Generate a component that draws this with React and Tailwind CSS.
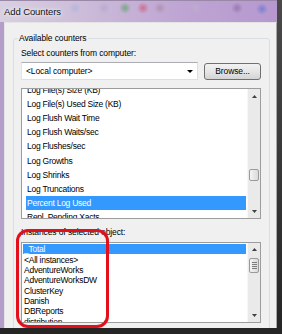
const counters = [
  'Log File(s) Size (KB)',
  'Log File(s) Used Size (KB)',
  'Log Flush Wait Time',
  'Log Flush Waits/sec',
  'Log Flushes/sec',
  'Log Growths',
  'Log Shrinks',
  'Log Truncations',
  'Percent Log Used',
  'Repl. Pending Xacts',
]

const instances = [
  '_Total',
  '<All instances>',
  'AdventureWorks',
  'AdventureWorksDW',
  'ClusterKey',
  'Danish',
  'DBReports',
  'distribution',
]

function Arrow({ up }) {
  return (
    <svg width="5" height="3" viewBox="0 0 5 3">
      <path d={up ? 'M0 3 L2.5 0 L5 3Z' : 'M0 0 L5 0 L2.5 3Z'} fill="#404040" />
    </svg>
  )
}

function Grip() {
  return (
    <svg width="5" height="7" viewBox="0 0 5 7">
      <path d="M0 0.5h5M0 2.5h5M0 4.5h5M0 6.5h5" stroke="#7d7d7d" strokeWidth="1" />
    </svg>
  )
}

function ScrollBar({ upClass, downClass, thumbClass, grip }) {
  return (
    <div className="flex w-[13px] flex-col border-l border-[#f7f7f7] bg-[#eaeaea]">
      <div className={`grid place-items-center ${upClass}`}>
        <Arrow up />
      </div>
      <div className="flex-1">
        <div className={`mx-[1px] grid place-items-center rounded-[2px] border border-[#9a9a9a] bg-gradient-to-r from-[#f4f4f4] to-[#dadada] ${thumbClass}`}>
          {grip && <Grip />}
        </div>
      </div>
      <div className={`grid place-items-center ${downClass}`}>
        <Arrow />
      </div>
    </div>
  )
}

function App() {
  return (
    <div className="relative h-[334px] w-[282px] overflow-hidden bg-gradient-to-b from-[#4a4a4a] to-[#252525] font-['Liberation_Sans',Arial,sans-serif] text-[8.5px] leading-[10px] tracking-[-0.1px] text-black">
      <div className="flex h-[328px] w-[277px] flex-col bg-[#b59dca]">
        <div className="flex h-[22px] items-center border-t border-[#9a88a8] bg-[radial-gradient(circle_at_75px_7px,rgba(150,175,225,0.45),transparent_6px),radial-gradient(circle_at_104px_7px,rgba(170,160,200,0.5),transparent_6px),radial-gradient(circle_at_125px_7px,rgba(70,160,80,0.6),transparent_6px),radial-gradient(circle_at_143px_7px,rgba(215,55,90,0.55),transparent_6px),radial-gradient(circle_at_160px_7px,rgba(150,110,130,0.4),transparent_6px),radial-gradient(circle_at_196px_7px,rgba(190,180,205,0.5),transparent_6px),radial-gradient(circle_at_237px_7px,rgba(120,85,145,0.5),transparent_6px),radial-gradient(circle_at_262px_8px,rgba(80,110,210,0.6),transparent_6px),linear-gradient(90deg,#d8d0e0,#cab8d8_35%,#bea5d3_65%,#b698cf)] pl-[4px] pt-[1px]">
          <span className="text-[9.5px] tracking-[-0.1px] text-[#111] [text-shadow:0_0_6px_#fff,0_0_3px_#fff]">Add Counters</span>
        </div>
        <div className="ml-[4px] flex-1 overflow-hidden border-l border-r border-t border-[#e4e4e4] border-r-[#a8a8a8] bg-[#f0f0f0]">
          <fieldset className="ml-[8px] mr-[6px] mt-[10px] h-[320px] rounded-[3px] border border-[#d5dfe5] pl-[7px] pr-[8px]">
            <legend className="-ml-[3px] px-[1px] leading-[10px]">Available counters</legend>
            <p className="mt-[5px] leading-[10px]">Select counters from computer:</p>
            <div className="mt-[4px] flex items-center gap-[6px]">
              <div className="flex h-[18px] w-[177px] items-center justify-between border border-[#abadb3] border-b-[#dbdfe6] border-l-[#e2e3ea] border-r-[#dbdfe6] bg-white pl-[4px] pr-[4px]">
                <span>&lt;Local computer&gt;</span>
                <svg width="6" height="3" viewBox="0 0 6 3">
                  <path d="M0 0 L6 0 L3 3Z" fill="#000" />
                </svg>
              </div>
              <button className="h-[17px] w-[57px] rounded-[3px] border border-[#707070] bg-gradient-to-b from-[#f2f2f2] via-[#e6e6e6] to-[#d3d3d3] text-center">
                Browse...
              </button>
            </div>
            <div className="mt-[8px] flex h-[131px] border border-[#9c9c9c] bg-white">
              <div className="flex-1 overflow-hidden tracking-[-0.25px]">
                <div className="-mt-[6px]">
                  {counters.map((name) => (
                    <div
                      key={name}
                      className={`ml-[4px] mr-[1px] flex h-[14.1px] items-center pl-[1px] ${name === 'Percent Log Used' ? 'bg-[#3399ff] text-white' : ''}`}
                    >
                      {name}
                    </div>
                  ))}
                </div>
              </div>
              <ScrollBar upClass="h-[14px]" downClass="h-[13px]" thumbClass="mt-[66px] h-[12px]" />
            </div>
            <p className="mt-[8px] leading-[10px]">Instances of selected object:</p>
            <div className="mt-[5px] flex h-[81px] border border-[#9c9c9c] bg-white">
              <div className="flex-1 overflow-hidden tracking-[-0.25px]">
                <div className="mt-[1px]">
                  {instances.map((name) => (
                    <div
                      key={name}
                      className={`ml-[1px] mr-[1px] flex h-[10.35px] items-center pl-[1px] ${name === '_Total' ? 'bg-[#3399ff] text-white' : ''}`}
                    >
                      {name}
                    </div>
                  ))}
                </div>
              </div>
              <ScrollBar upClass="h-[13px]" downClass="h-[13px]" thumbClass="mt-[2px] h-[15px]" grip />
            </div>
          </fieldset>
        </div>
      </div>
      <div className="absolute left-[16px] top-[229px] h-[99px] w-[93px] rounded-[12px] border-[3px] border-[#e3101c]" />
    </div>
  )
}

export default App
